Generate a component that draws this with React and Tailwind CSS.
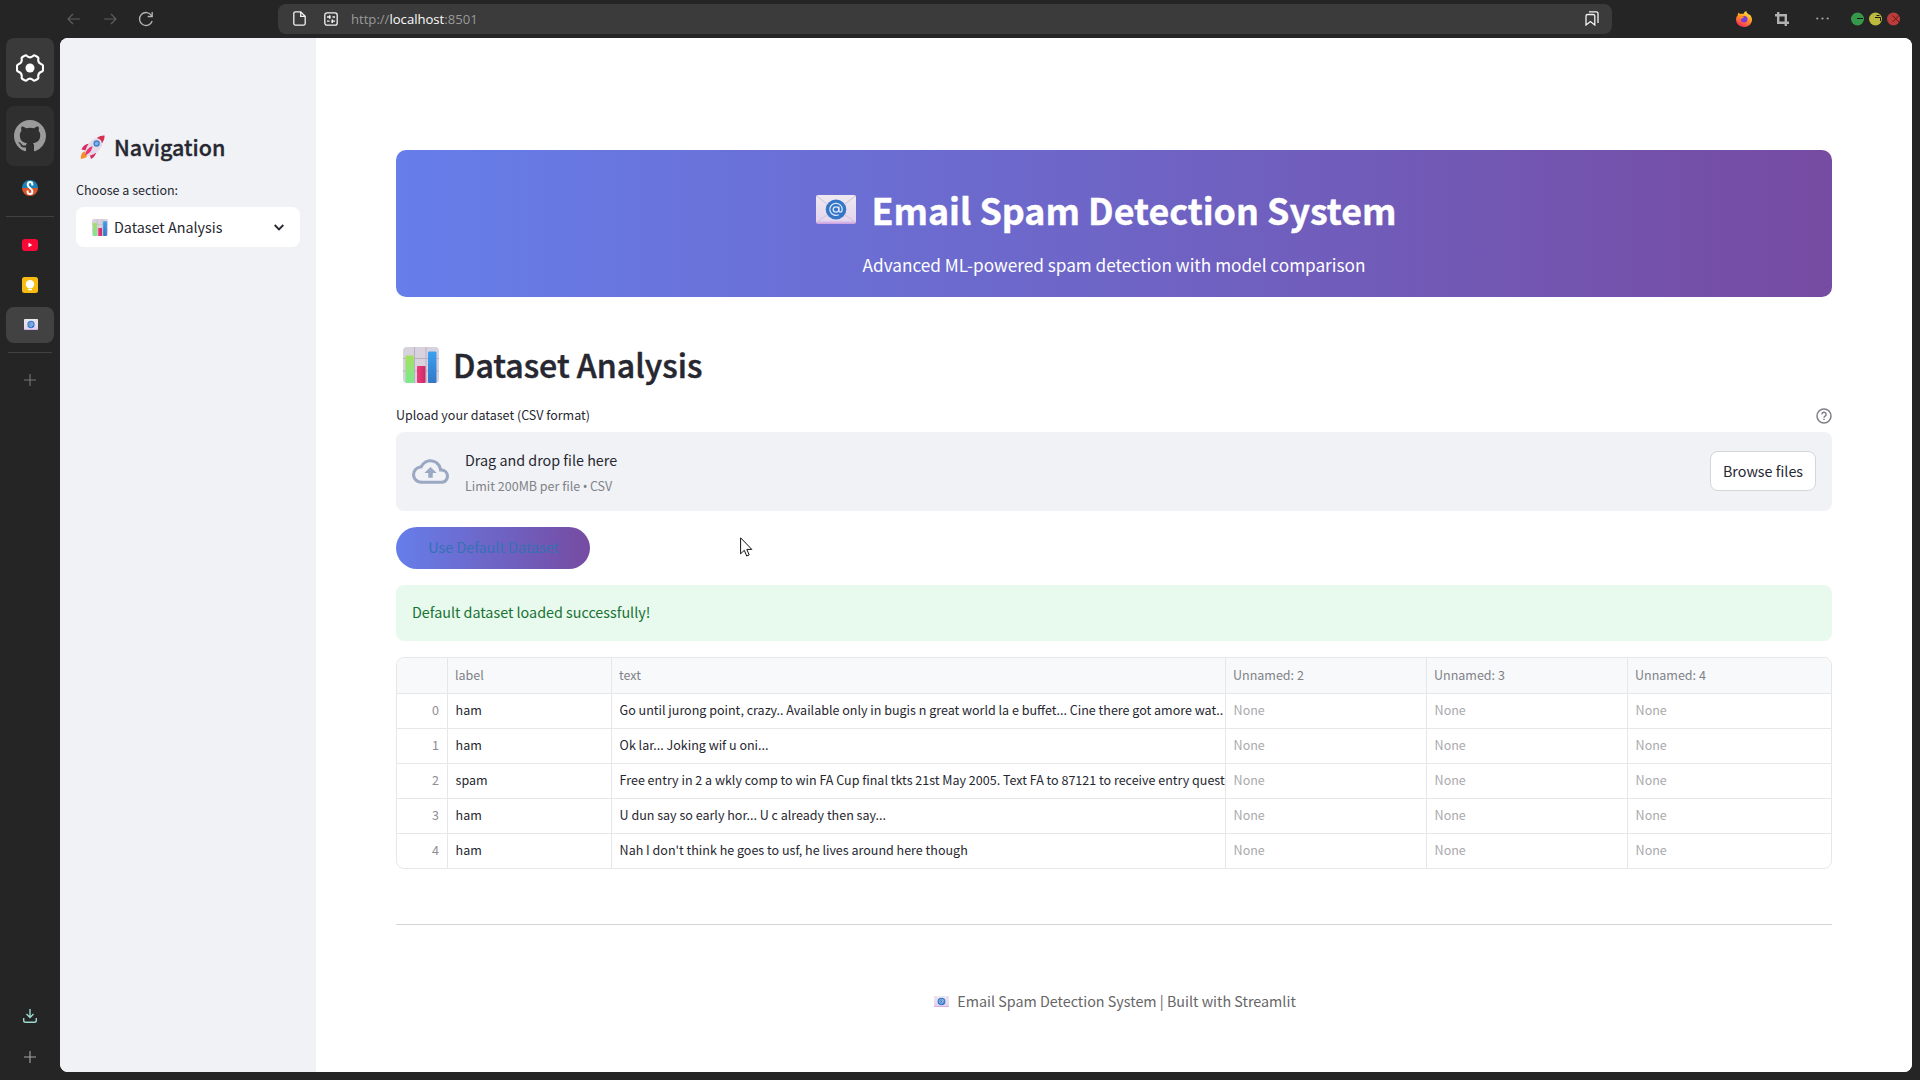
import React from 'react';

const Chart = ({ className }) => (
  <svg viewBox="0 0 36 36" className={className} preserveAspectRatio="none">
    <defs>
      <linearGradient id="cg" x1="0" y1="0" x2="0" y2="1"><stop offset="0" stopColor="#a5df5f" /><stop offset="1" stopColor="#7be98f" /></linearGradient>
      <linearGradient id="cb" x1="0" y1="0" x2="0" y2="1"><stop offset="0" stopColor="#3ba0f0" /><stop offset="1" stopColor="#3576c8" /></linearGradient>
      <linearGradient id="cr" x1="0" y1="0" x2="1" y2="0"><stop offset="0" stopColor="#ef3a7a" /><stop offset="1" stopColor="#c92a68" /></linearGradient>
    </defs>
    <rect width="36" height="36" rx="4" fill="#d8d2df" />
    <path d="M11.5 0v36M23 0v36M0 11.5h36M0 24h36" stroke="#b9b1c2" strokeWidth="1" />
    <rect x="2.5" y="8.5" width="8.5" height="27.5" rx="1" fill="url(#cg)" />
    <rect x="14" y="19" width="8.5" height="17" rx="1" fill="url(#cr)" />
    <rect x="25" y="4.5" width="8.5" height="31.5" rx="1" fill="url(#cb)" />
  </svg>
);

const Envelope = ({ className }) => (
  <svg viewBox="0 0 40 30" className={className} preserveAspectRatio="none">
    <defs>
      <linearGradient id="ev" x1="0" y1="0" x2="0" y2="1"><stop offset="0" stopColor="#eee9f0" /><stop offset=".88" stopColor="#e4d6ee" /><stop offset="1" stopColor="#c99be0" /></linearGradient>
    </defs>
    <rect width="40" height="30" rx="2" fill="url(#ev)" />
    <path d="M1 1l14 12M39 1L25 13M1 28l12-9M39 28l-12-9" stroke="#cfc0d8" strokeWidth="1" fill="none" />
    <circle cx="20" cy="15" r="10.3" fill="#3476c6" />
    <circle cx="20" cy="15" r="2.8" fill="none" stroke="#dce8fa" strokeWidth="1.3" />
    <path d="M22.9 12v4.2c0 2.3 3.3 2 3.3-1.2a6.2 6.2 0 1 0-3.4 5.4" fill="none" stroke="#dce8fa" strokeWidth="1.3" />
  </svg>
);

const Rocket = ({ className }) => (
  <svg viewBox="0 0 26 26" className={className}>
    <path d="M2 19c2-3 5-2 6 0s-1 4-3 5l-4 1c-.6-2 0-4 1-6z" fill="#f5912e" />
    <path d="M10 9c-4 0-7 2-8.500 6l6 1.500zM17 16c0 4-2 7-5.500 9l-2-6z" fill="#d72c62" />
    <path d="M5 20C6 10 12 3 22 2l2 2c0 10-6 16-16 18z" fill="#e3dbe9" />
    <path d="M17.500 3.200C20 1 23.500.3 25.500.5c.3 2-.5 5.500-2.700 8C22.500 6 20.500 3.800 17.500 3.200z" fill="#d5304f" />
    <circle cx="17.300" cy="8.800" r="3.300" fill="#4380c6" />
    <circle cx="17.300" cy="8.800" r="1.900" fill="#78b5f1" />
    <path d="M5 21c1-4.500 3.500-8 8-9.500-.5 5-3.500 8.500-8 9.500z" fill="#e8366f" />
  </svg>
);

const Firefox = () => (
  <svg viewBox="0 0 16 16" className="size-4">
    <defs>
      <linearGradient id="ff" x1=".8" y1="0" x2=".3" y2="1"><stop offset="0" stopColor="#fff04a" /><stop offset=".45" stopColor="#ff9a1f" /><stop offset="1" stopColor="#f5265c" /></linearGradient>
    </defs>
    <path d="M1.600 4.500C1.600 3.200 2.300 2 3 1.600c.1.700.6 1.200 1 1.500C5.200 2.600 6.600 2.600 7.500 3 8 1.500 9 .4 10.300 0c0 1.800 1.400 2.300 2.400 3.400.5.300.8.300 1.100.1 1.300 1.500 2.200 3.400 2.200 5.200C16 12.800 12.500 16 8 16S0 12.800 0 8.600c0-1.600.6-3.100 1.600-4.100z" fill="url(#ff)" />
    <circle cx="8.200" cy="8.300" r="3.300" fill="#7a3ad8" />
    <path d="M3.500 5.500c2-.9 3.600-.4 4.600.9-1.200.2-1.800.7-2.400 1.700-.7-.4-1.900-1.300-2.200-2.600z" fill="#ff8a20" />
  </svg>
);

const Plus = ({ className }) => (
  <svg viewBox="0 0 12 12" className={className}><path d="M6 0v12M0 6h12" stroke="currentColor" strokeWidth="1.100" /></svg>
);

const rows = [
  ['ham', 'Go until jurong point, crazy.. Available only in bugis n great world la e buffet... Cine there got amore wat..'],
  ['ham', 'Ok lar... Joking wif u oni...'],
  ['spam', 'Free entry in 2 a wkly comp to win FA Cup final tkts 21st May 2005. Text FA to 87121 to receive entry quest'],
  ['ham', 'U dun say so early hor... U c already then say...'],
  ['ham', "Nah I don't think he goes to usf, he lives around here though"],
];

function TopBar() {
  return (
    <header className="flex h-[38px] shrink-0 items-center pb-px text-[#9b9b9b]">
      <div className="flex w-[278px] items-center pl-[67px]">
        <svg viewBox="0 0 14 12" className="h-3 w-[14px] text-[#5e5e5e]" fill="none" stroke="currentColor" strokeWidth="1.200"><path d="M13 6H1M6 1L1 6l5 5" /></svg>
        <svg viewBox="0 0 14 12" className="ml-[22px] h-3 w-[14px] text-[#5e5e5e]" fill="none" stroke="currentColor" strokeWidth="1.200"><path d="M1 6h12M8 1l5 5-5 5" /></svg>
        <svg viewBox="0 0 16 16" className="ml-[21px] size-4 text-[#b5b5b5]" fill="none" stroke="currentColor" strokeWidth="1.300"><path d="M14.200 10A6.500 6.500 0 1 1 13.500 4.500M14.200 1v4.500H9.700" /></svg>
      </div>
      <div className="flex h-[30px] w-[1334px] items-center rounded-lg bg-[#3b3b3b] pr-[13px] pl-[15px] text-[#f2f2f2]">
        <svg viewBox="0 0 13 15" className="h-[15px] w-[13px]" fill="none" stroke="currentColor" strokeWidth="1.300"><path d="M2.500.8h5.200l4.500 4.500v7.200a1.600 1.600 0 0 1-1.600 1.600H2.400A1.600 1.600 0 0 1 .8 12.500v-10A1.700 1.700 0 0 1 2.500.8zM7.700.8v4.500h4.500" /></svg>
        <svg viewBox="0 0 14 14" className="ml-[18px] size-[14px]" fill="none" stroke="currentColor" strokeWidth="1.300"><rect x=".8" y=".8" width="12.400" height="12.400" rx="2.200" /><path d="M3 5h3.500M8.500 5H11M3 9.200h2.500M7.500 9.200H11" /><path d="M5.700 3.200v3.600M8.300 7.400V11" strokeWidth="1.500" /></svg>
        <span className="mt-[3px] ml-[13px] font-['Open_Sans',sans-serif] text-[13.1px] text-[#9a9a9a]">http://<span className="text-[#fbfbfb]">localhost</span>:8501</span>
        <svg viewBox="0 0 14 15" className="ml-auto h-[15px] w-[14px]" fill="none" stroke="currentColor" strokeWidth="1.300"><path d="M1 5a1.500 1.500 0 0 1 1.500-1.500h5.800A1.500 1.500 0 0 1 9.800 5v9L5.400 10.500 1 14z" /><path d="M4 .8h7.200A1.800 1.800 0 0 1 13 2.600V12" /></svg>
      </div>
      <div className="ml-[124px] flex items-center">
        <Firefox />
        <svg viewBox="0 0 14 14" className="ml-[23px] size-[14px] text-[#b0b0b0]" fill="none" stroke="currentColor" strokeWidth="2.400"><path d="M3.200 0v10.800H14M0 3.200h10.800V14" /></svg>
        <svg viewBox="0 0 13 3" className="ml-[27px] h-[3px] w-[13px] text-[#a8a8a8]" fill="currentColor"><circle cx="1.300" cy="1.500" r="1.100" /><circle cx="6.500" cy="1.500" r="1.100" /><circle cx="11.700" cy="1.500" r="1.100" /></svg>
        <svg viewBox="0 0 50 14" className="ml-[22px] mt-px h-[14px] w-[50px]" fill="none" stroke="#181818" strokeWidth="1">
          <circle cx="6.500" cy="7" r="6.500" fill="#36994a" stroke="none" /><path d="M6 6.500h6" />
          <circle cx="24.500" cy="7" r="6.500" fill="#bdb93e" stroke="none" /><path d="M24 5.500h5.500V9M25.500 3.500h3" />
          <circle cx="42.500" cy="7" r="6.500" fill="#bb3d3b" stroke="none" /><path d="M41.500 3.500l6.500 6.500M48 3.500l-6.500 6.500" stroke="#6e1212" />
        </svg>
      </div>
    </header>
  );
}

function Rail() {
  return (
    <aside className="flex w-[60px] shrink-0 flex-col items-center">
      <div className="flex h-[60px] w-12 items-center justify-center rounded-lg bg-[#3a3a3a]">
        <svg viewBox="0 0 28 28" className="size-7" fill="none" stroke="#fff" strokeWidth="2.100" strokeLinejoin="round">
          <path d="M8.800 1.600Q10 .9 11 2Q14 4.600 17 2Q18 .9 19.200 1.600L21.500 3Q22.700 3.700 22.300 5Q21.700 9 25.500 10.300Q27 10.800 27 12.200V15.800Q27 17.200 25.500 17.700Q21.700 19 22.300 23Q22.700 24.300 21.500 25L19.200 26.400Q18 27.100 17 26Q14 23.400 11 26Q10 27.100 8.800 26.400L6.500 25Q5.300 24.300 5.700 23Q6.300 19 2.500 17.700Q1 17.200 1 15.800V12.200Q1 10.800 2.500 10.300Q6.300 9 5.700 5Q5.300 3.700 6.500 3Z" />
          <circle cx="14" cy="14" r="4.500" fill="#fff" stroke="none" />
        </svg>
      </div>
      <div className="mt-2 flex h-[60px] w-12 items-center justify-center rounded-lg bg-[#2f2f2f]">
        <svg viewBox="0 0 16 16" className="size-8" fill="#9b9b9b"><path d="M8 0C3.580 0 0 3.580 0 8c0 3.540 2.290 6.530 5.470 7.590.4.070.55-.17.55-.38 0-.19-.010-.82-.010-1.490-2.010.37-2.530-.49-2.690-.94-.09-.23-.48-.94-.82-1.130-.28-.15-.68-.52-.010-.53.63-.010 1.080.58 1.230.82.72 1.210 1.870.87 2.330.66.070-.52.28-.87.510-1.070-1.780-.2-3.640-.89-3.640-3.950 0-.87.31-1.590.82-2.150-.08-.2-.36-1.020.08-2.120 0 0 .67-.21 2.200.82.64-.18 1.320-.27 2-.27s1.360.09 2 .27c1.530-1.040 2.200-.82 2.200-.82.44 1.100.16 1.920.08 2.120.51.56.82 1.270.82 2.150 0 3.070-1.870 3.750-3.650 3.950.29.25.54.73.54 1.480 0 1.070-.010 1.930-.010 2.200 0 .21.15.46.55.38A8.010 8.010 0 0 0 16 8c0-4.420-3.580-8-8-8z" /></svg>
      </div>
      <svg viewBox="0 0 16 16" className="mt-[14px] size-4">
        <path d="M0 8a8 8 0 0 1 16 0z" fill="#1c7fb8" /><path d="M0 8a8 8 0 0 0 16 0z" fill="#d9542b" />
        <path d="M10.300 5.500V4.200Q10.300 2 8 2T5.700 4.500Q5.700 6.500 8 8t2.400 3.500Q10.400 14 8 14t-2.400-2.300V10.500" fill="none" stroke="#fff" strokeWidth="2" />
      </svg>
      <div className="mt-5 h-px w-12 bg-[#414141]" />
      <svg viewBox="0 0 16 12" className="mt-[22px] h-3 w-4"><rect width="16" height="12" rx="3" fill="#fa0836" /><path d="M6.500 3.700v4.600L10.300 6z" fill="#fff" /></svg>
      <svg viewBox="0 0 16 16" className="mt-[26px] size-4"><rect width="16" height="16" rx="2.500" fill="#f8bb12" /><circle cx="8" cy="7.200" r="4.200" fill="#fff" /><path d="M6 10h4v1H6zM6 11.900h4v1.300H6z" fill="#fff" /></svg>
      <div className="mt-[14px] flex h-9 w-12 items-center justify-center rounded-lg bg-[#424242]"><Envelope className="mb-px ml-[2px] h-[11px] w-[14px]" /></div>
      <div className="mt-[9px] h-px w-11 bg-[#414141]" />
      <Plus className="mt-[21px] size-3 text-[#777]" />
      <svg viewBox="0 0 14 14" className="mt-[623px] size-[14px]" fill="none" stroke="#9bd8cf" strokeWidth="1.400"><path d="M7 0v8.500M3.500 5L7 8.500 10.500 5M.7 9v2.500a1.800 1.800 0 0 0 1.800 1.800h9a1.800 1.800 0 0 0 1.800-1.800V9" /></svg>
      <Plus className="mt-[28px] size-3 text-[#a5a5a5]" />
    </aside>
  );
}

function Sidebar() {
  return (
    <nav className="w-64 shrink-0 bg-[#f0f2f6] px-4 pt-[93px]">
      <div className="flex h-8 items-center pl-1">
        <Rocket className="size-[25px]" />
        <h2 className="ml-[9px] text-[21.5px] leading-8 font-medium [-webkit-text-stroke:0.35px_#262730]">Navigation</h2>
      </div>
      <p className="mt-[15px] text-[12.53px] leading-6">Choose a section:</p>
      <div className="mt-[5px] flex h-10 items-center rounded-lg bg-white pr-4 pl-4">
        <Chart className="h-[17px] w-4" />
        <span className="ml-[6px] text-[14.33px] leading-6">Dataset Analysis</span>
        <svg viewBox="0 0 10 7" className="ml-auto h-[7px] w-[10px]" fill="none" stroke="#262730" strokeWidth="1.900"><path d="M.7 1L5 5.300 9.300 1" /></svg>
      </div>
    </nav>
  );
}

function Cell({ className = 'pl-[7.6px]', children }) {
  return <div className={'overflow-hidden border-r border-[#e6e7e9] whitespace-nowrap last:border-r-0 ' + className}>{children}</div>;
}

function DataTable() {
  const cols = 'grid grid-cols-[51px_164px_614px_201px_201px_203px]';
  return (
    <div className="mt-4 overflow-hidden rounded-lg border border-[#e6e7e9] text-[12.53px]">
      <div className={cols + ' h-9 border-b border-[#e6e7e9] bg-[#f8f9fb] leading-[34px] text-[#808288]'}>
        {['', 'label', 'text', 'Unnamed: 2', 'Unnamed: 3', 'Unnamed: 4'].map((h, i) => <Cell key={i} className="pl-[7px]">{h}</Cell>)}
      </div>
      {rows.map(([label, text], i) => (
        <div key={i} className={cols + ' h-[35px] border-b border-[#e6e7e9] leading-[32px] last:h-[34px] last:border-b-0'}>
          <Cell className="pr-2 text-right text-[#8d8e93]">{i}</Cell>
          <Cell>{label}</Cell>
          <Cell>{text}</Cell>
          <Cell className="pl-[7.6px] text-[#a9aaad]">None</Cell>
          <Cell className="pl-[7.6px] text-[#a9aaad]">None</Cell>
          <Cell className="pl-[7.6px] text-[#a9aaad]">None</Cell>
        </div>
      ))}
    </div>
  );
}

function Main() {
  return (
    <main className="flex-1 bg-white px-20 pt-28">
      <section className="h-[147px] rounded-[10px] bg-[linear-gradient(90deg,#667eea_0%,#764ba2_100%)] pt-[35px] text-white">
        <div className="flex h-12 items-center justify-center pr-[15px]">
          <Envelope className="h-[29px] w-10" />
          <h1 className="ml-[15px] text-[35.8px] leading-[48px] font-bold [-webkit-text-stroke:0.4px_#fff]">Email Spam Detection System</h1>
        </div>
        <p className="mt-[17px] text-center text-[17.2px] leading-[29px]">Advanced ML-powered spam detection with model comparison</p>
      </section>

      <div className="mt-[45px] flex h-11 items-center pl-[7px]">
        <Chart className="mt-[2px] size-9" />
        <h2 className="ml-[14px] text-[32.1px] leading-[44px] font-medium [-webkit-text-stroke:0.5px_#262730]">Dataset Analysis</h2>
      </div>

      <div className="mt-[17px] flex h-6 items-center justify-between text-[12.53px]">
        <span>Upload your dataset (CSV format)</span>
        <svg viewBox="0 0 16 16" className="mt-[2px] size-4" fill="none" stroke="#7e8086" strokeWidth="1.500"><circle cx="8" cy="8" r="7" /><path d="M5.900 6.400a2.100 2.100 0 1 1 3.200 1.700c-.8.500-1.100.8-1.100 1.600M8 10.700v1.300" /></svg>
      </div>

      <div className="mt-[5px] flex h-[79px] items-center rounded-lg bg-[#f0f2f6] px-4">
        <svg viewBox="0 4 24 16" className="h-[25px] w-[37px] text-[#9aa8c3]" fill="currentColor"><path d="M19.350 10.040A7.490 7.490 0 0 0 12 4C9.110 4 6.600 5.640 5.350 8.040A5.994 5.994 0 0 0 0 14c0 3.310 2.690 6 6 6h13c2.760 0 5-2.240 5-5 0-2.640-2.050-4.780-4.650-4.960zM19 18H6c-2.210 0-4-1.790-4-4 0-2.050 1.530-3.760 3.560-3.970l1.070-.110.5-.95A5.469 5.469 0 0 1 12 6c2.620 0 4.880 1.860 5.390 4.430l.3 1.500 1.530.110A2.980 2.980 0 0 1 22 15c0 1.650-1.350 3-3 3zM8 13h2.550v3h2.900v-3H16l-4-4z" /></svg>
        <div className="mt-[2px] ml-4">
          <p className="text-[14.33px] leading-6">Drag and drop file here</p>
          <p className="mt-[3px] text-[12.53px] leading-[21px] text-[#808288]">Limit 200MB per file <span className="-mx-[0.3px] font-['Noto_Sans',sans-serif]">•</span> CSV</p>
        </div>
        <button className="-mt-px ml-auto h-10 w-[106px] rounded-lg border border-[#d5d6d8] bg-white pb-px text-[14.33px]">Browse files</button>
      </div>

      <button className="mt-4 block h-[42px] w-[194px] rounded-[21px] bg-[linear-gradient(90deg,#667eea_0%,#764ba2_100%)] pb-[2px] pl-px text-[14.33px] text-[#3472b4]">Use Default Dataset</button>

      <div className="mt-4 flex h-14 items-center rounded-lg bg-[#e8f9ee] px-4 pb-[2px] text-[14.33px] text-[#177233]">Default dataset loaded successfully!</div>

      <DataTable />

      <hr className="mt-[55px] border-t border-[#d4d5d8]" />

      <footer className="mt-[64px] flex h-6 items-center justify-center pl-[2px] text-[14.33px] text-[#666]">
        <Envelope className="mr-[8px] h-[11px] w-[15px]" />
        <span>Email Spam Detection System | Built with Streamlit</span>
      </footer>
    </main>
  );
}

export default function App() {
  return (
    <div className="relative flex h-[1080px] w-[1920px] flex-col overflow-hidden bg-[#252525] font-['Noto_Sans_CJK_SC','Noto_Sans',sans-serif] text-[#262730]">
      <TopBar />
      <div className="flex h-[1034px]">
        <Rail />
        <div className="flex h-[1034px] w-[1852px] overflow-hidden rounded-lg bg-white">
          <Sidebar />
          <Main />
        </div>
      </div>
      <svg viewBox="0 0 13 20" className="absolute top-[537px] left-[740px] h-5 w-[13px]"><path d="M.6.800v16l3.700-3.500 2.400 5.700 2.500-1.100-2.400-5.500h5z" fill="#fff" stroke="#111" strokeWidth="1" /></svg>
    </div>
  );
}
